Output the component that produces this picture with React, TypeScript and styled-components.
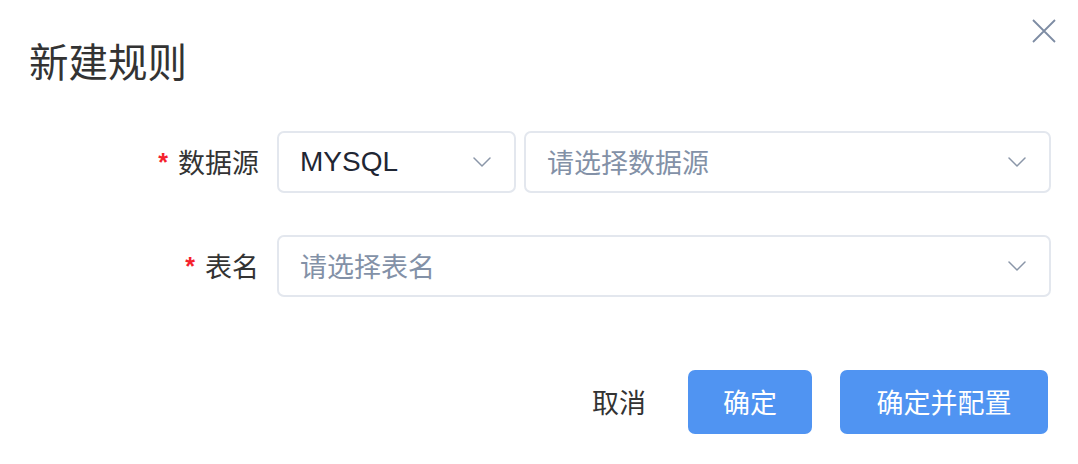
import React from "react";
import styled, { createGlobalStyle } from "styled-components";

const GlobalStyle = createGlobalStyle`
  html, body {
    margin: 0;
    padding: 0;
    background: #ffffff;
  }
  body {
    font-family: "Liberation Sans", "Noto Sans CJK SC", sans-serif;
  }
`;

const Dialog = styled.div`
  position: relative;
  width: 1078px;
  height: 464px;
  box-sizing: border-box;
  padding: 40px 27px 0 29px;
  background: #ffffff;
`;

const Header = styled.header`
  display: flex;
  align-items: flex-start;
`;

const Title = styled.h2`
  margin: 0;
  font-family: "Noto Sans CJK SC", sans-serif;
  font-size: 39.5px;
  line-height: 1;
  font-weight: 400;
  color: #333333;
`;

const CloseButton = styled.button`
  position: absolute;
  top: 19px;
  right: 22px;
  width: 24px;
  height: 24px;
  padding: 0;
  border: none;
  background: transparent;
  cursor: pointer;
  display: flex;
`;

const Form = styled.form`
  display: flex;
  flex-direction: column;
  gap: 42px;
  margin-top: 51px;
`;

const FormItem = styled.div`
  display: flex;
  align-items: center;
  gap: 18px;
`;

const Label = styled.label`
  width: 230px;
  flex-shrink: 0;
  text-align: right;
  font-family: "Noto Sans CJK SC", sans-serif;
  font-size: 27px;
  color: #333333;
`;

const Required = styled.span`
  color: #f5222d;
  font-family: "Liberation Sans", sans-serif;
  font-weight: 700;
  font-size: 25px;
  margin-right: 10px;
  vertical-align: 2px;
`;

const Controls = styled.div`
  flex: 1;
  display: flex;
  gap: 8px;
`;

const SelectBox = styled.div<{ $width?: number }>`
  ${(p) => (p.$width ? `width: ${p.$width}px; flex-shrink: 0;` : "flex: 1;")}
  box-sizing: border-box;
  height: 62px;
  display: flex;
  align-items: center;
  justify-content: space-between;
  padding: 0 23px 0 21px;
  border: 2px solid #e3e7ee;
  border-radius: 7px;
  background: #ffffff;
`;

const SelectText = styled.span<{ $placeholder?: boolean }>`
  font-family: ${(p) =>
    p.$placeholder
      ? `"Noto Sans CJK SC", sans-serif`
      : `"Liberation Sans", "Noto Sans CJK SC", sans-serif`};
  font-size: ${(p) => (p.$placeholder ? "27px" : "28px")};
  color: ${(p) => (p.$placeholder ? "#8391a7" : "#1f2633")};
`;

const Footer = styled.footer`
  display: flex;
  justify-content: flex-end;
  align-items: center;
  gap: 28px;
  margin-top: 73px;
  padding-right: 3px;
`;

const TextButton = styled.button`
  border: none;
  background: transparent;
  padding: 0;
  margin-right: 14px;
  font-family: "Noto Sans CJK SC", sans-serif;
  font-size: 27px;
  color: #333333;
  cursor: pointer;
`;

const PrimaryButton = styled.button<{ $width: number }>`
  width: ${(p) => p.$width}px;
  height: 64px;
  border: none;
  border-radius: 7px;
  background: #5094f2;
  color: #ffffff;
  font-family: "Noto Sans CJK SC", sans-serif;
  font-size: 27px;
  cursor: pointer;
`;

function Chevron() {
  return (
    <svg width="18" height="10" viewBox="0 0 18 10" fill="none">
      <polyline
        points="1,1 9,9 17,1"
        stroke="#8a96a8"
        strokeWidth="1.5"
        strokeLinejoin="round"
        strokeLinecap="round"
      />
    </svg>
  );
}

function CloseIcon() {
  return (
    <svg width="24" height="24" viewBox="0 0 24 24" fill="none">
      <path d="M1 1L23 23M23 1L1 23" stroke="#7d8ca3" strokeWidth="1.8" />
    </svg>
  );
}

function Select({
  value,
  placeholder,
  width,
}: {
  value?: string;
  placeholder?: string;
  width?: number;
}) {
  return (
    <SelectBox $width={width}>
      {value ? (
        <SelectText>{value}</SelectText>
      ) : (
        <SelectText $placeholder>{placeholder}</SelectText>
      )}
      <Chevron />
    </SelectBox>
  );
}

export default function App() {
  return (
    <>
      <GlobalStyle />
      <Dialog>
        <Header>
          <Title>新建规则</Title>
          <CloseButton aria-label="关闭">
            <CloseIcon />
          </CloseButton>
        </Header>
        <Form>
          <FormItem>
            <Label>
              <Required>*</Required>数据源
            </Label>
            <Controls>
              <Select value="MYSQL" width={239} />
              <Select placeholder="请选择数据源" />
            </Controls>
          </FormItem>
          <FormItem>
            <Label>
              <Required>*</Required>表名
            </Label>
            <Controls>
              <Select placeholder="请选择表名" />
            </Controls>
          </FormItem>
        </Form>
        <Footer>
          <TextButton type="button">取消</TextButton>
          <PrimaryButton type="button" $width={124}>
            确定
          </PrimaryButton>
          <PrimaryButton type="button" $width={208}>
            确定并配置
          </PrimaryButton>
        </Footer>
      </Dialog>
    </>
  );
}
